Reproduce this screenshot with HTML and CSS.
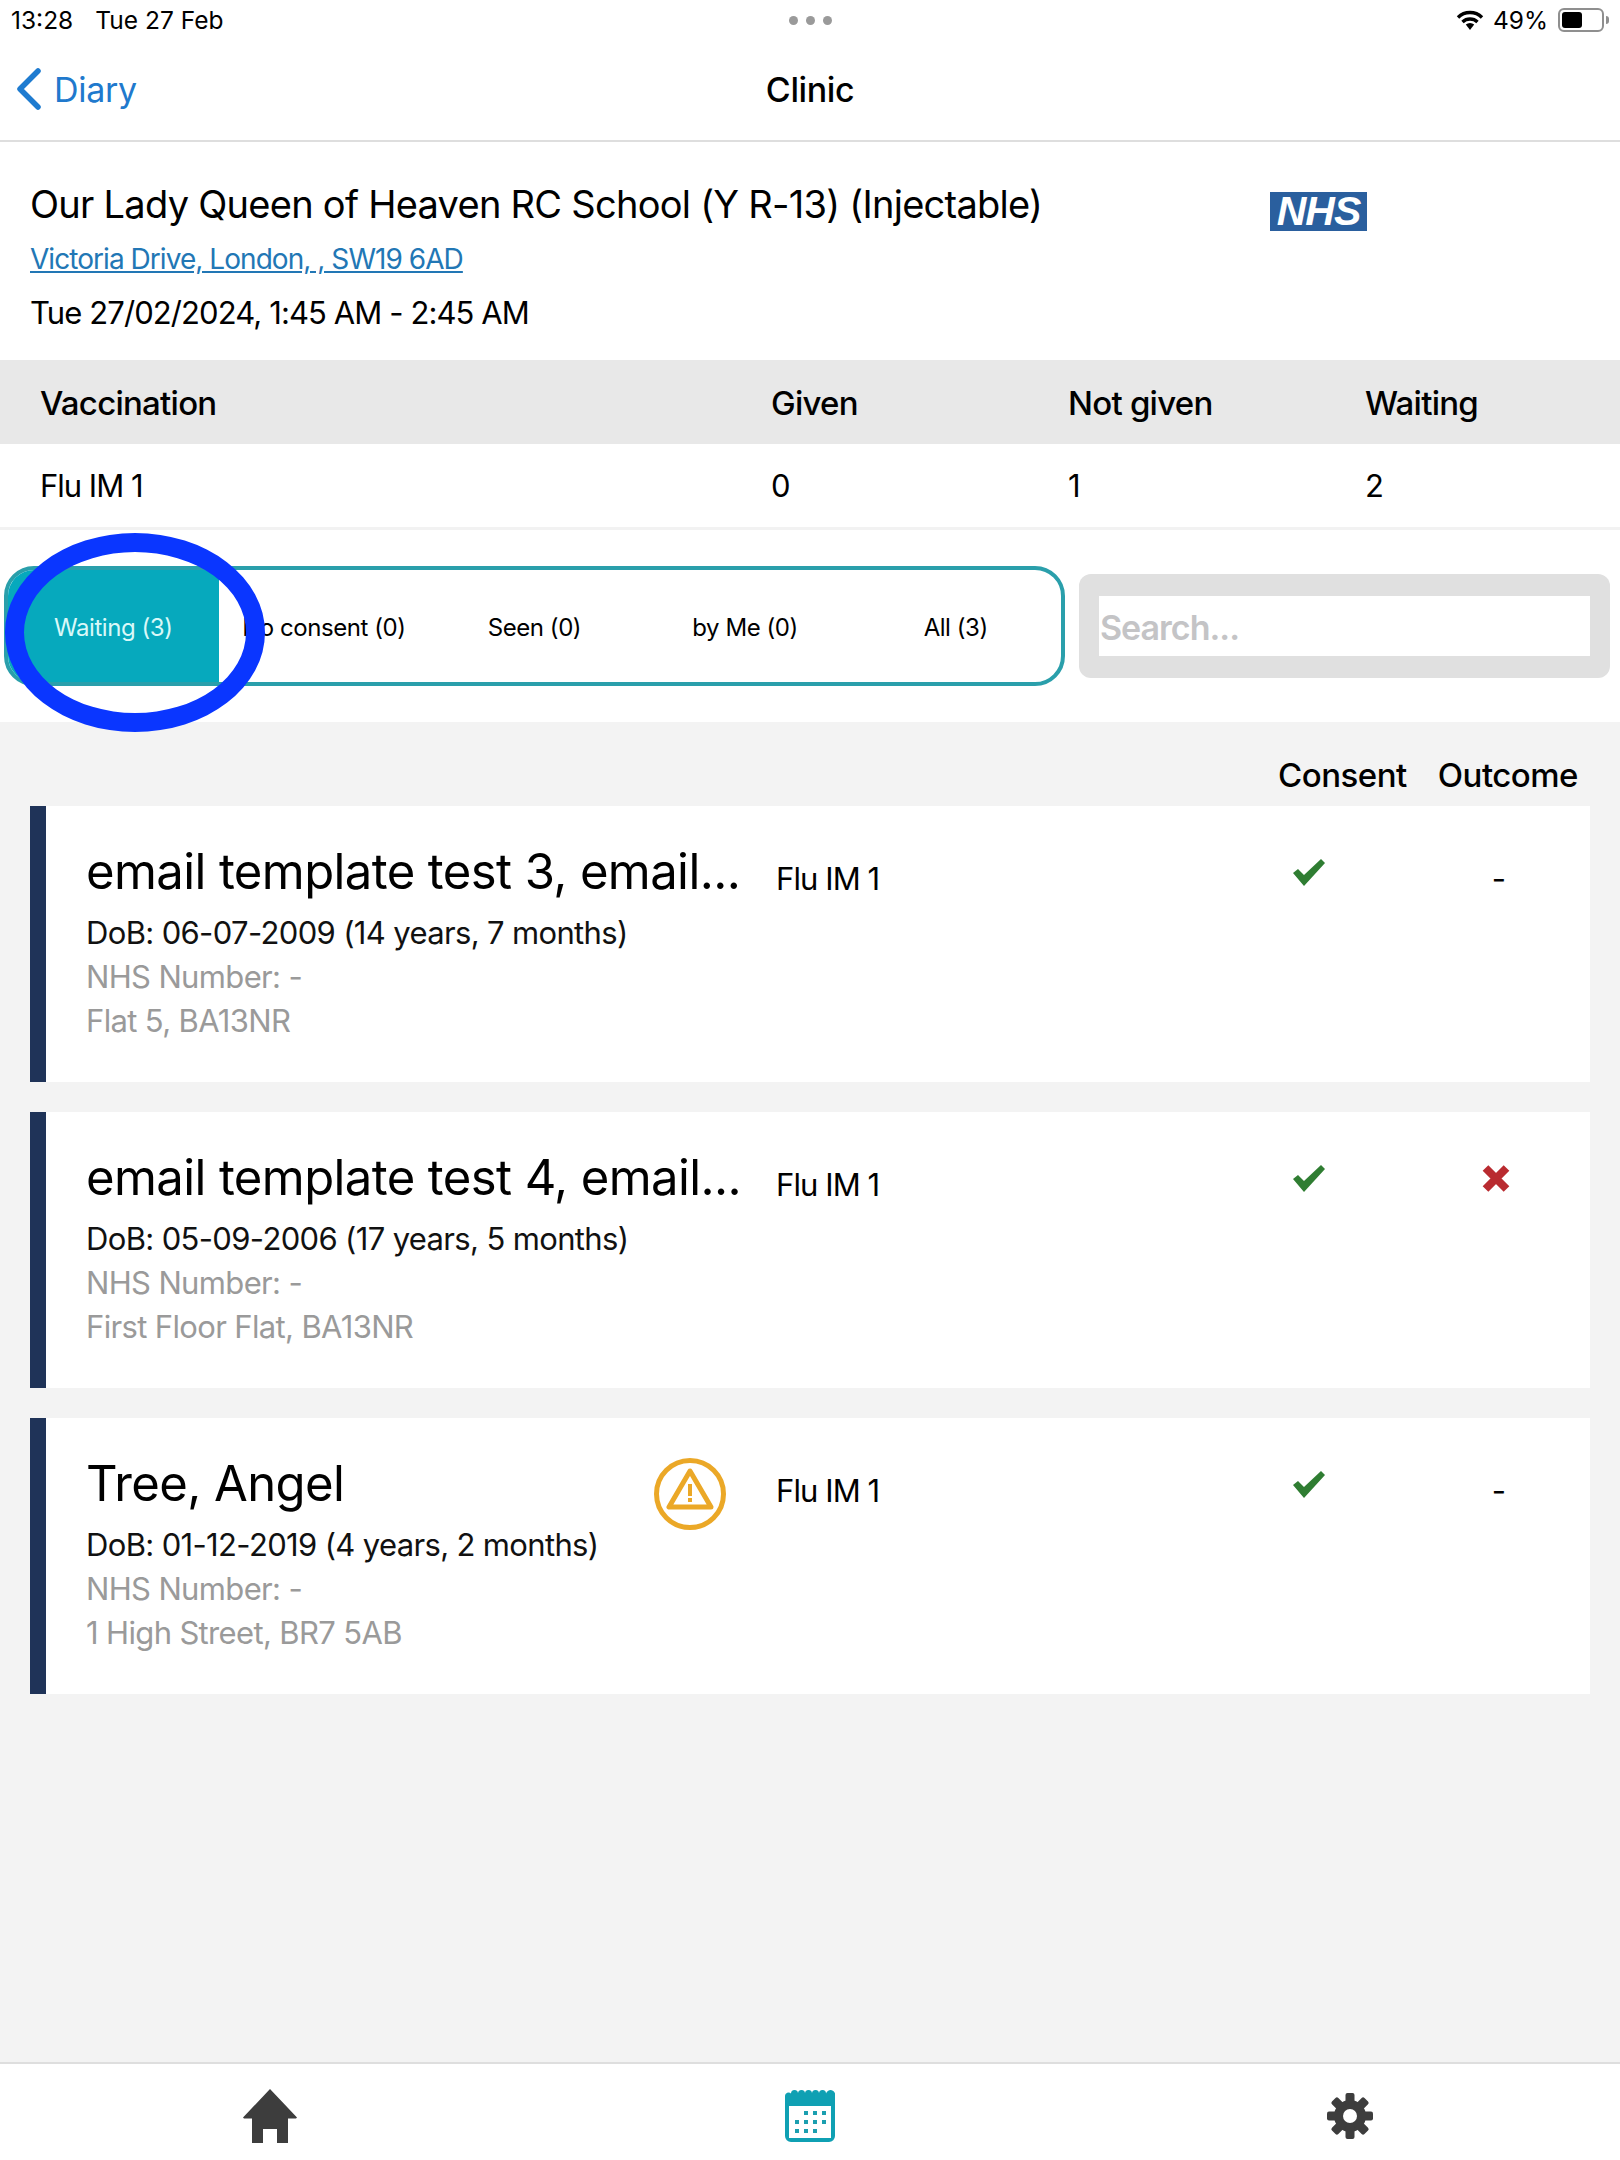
FILE: index.html
```html
<!doctype html>
<html lang="en">
    <head>
        <meta charset="UTF-8" />
        <title>Clinic</title>
        <link rel="stylesheet" href="styles.css">
    </head>
    <body>
        <svg class="defs" width="0" height="0">
            <symbol id="tick" viewBox="0 0 32 27">
                <polygon points="0,14 5,10 11,16 28,0 32,4 11,27" fill="#2f7d32" />
            </symbol>
        </svg>

        <div class="app">
            <div class="status-bar">
                <div class="status-left"><span>13:28</span><span>Tue 27 Feb</span></div>
                <div class="status-dots"><i></i><i></i><i></i></div>
                <div class="status-right">
                    <svg width="28" height="20" viewBox="0 0 28 20">
                        <path d="M2 7.5a17 17 0 0 1 24 0M6.5 12a11 11 0 0 1 15 0" fill="none" stroke="#000" stroke-width="3.4" />
                        <path d="M9.8 14.6a6 6 0 0 1 8.4 0L14 20z" fill="#000" />
                    </svg>
                    <span>49%</span>
                    <div class="battery"><div class="battery-fill"></div></div>
                    <div class="battery-nub"></div>
                </div>
            </div>

            <div class="nav-bar">
                <a class="back-link">
                    <svg width="26" height="42" viewBox="0 0 26 42">
                        <polyline points="23,3 5,21 23,39" fill="none" stroke="#1e7bd0" stroke-width="5.5" stroke-linecap="round" stroke-linejoin="round" />
                    </svg>
                    <span>Diary</span>
                </a>
                <div class="nav-title">Clinic</div>
            </div>

            <div class="clinic-info">
                <div>
                    <h1>Our Lady Queen of Heaven RC School (Y R-13) (Injectable)</h1>
                    <a class="address">Victoria Drive, London, , SW19 6AD</a>
                    <p class="clinic-time">Tue 27/02/2024, 1:45 AM - 2:45 AM</p>
                </div>
                <div class="nhs-logo">NHS</div>
            </div>

            <div class="summary summary-head">
                <div>Vaccination</div>
                <div>Given</div>
                <div>Not given</div>
                <div>Waiting</div>
            </div>
            <div class="summary summary-row">
                <div>Flu IM 1</div>
                <div>0</div>
                <div>1</div>
                <div>2</div>
            </div>

            <div class="filter-bar">
                <div class="tabs">
                    <div class="tab active">Waiting (3)</div>
                    <div class="tab">No consent (0)</div>
                    <div class="tab">Seen (0)</div>
                    <div class="tab">by Me (0)</div>
                    <div class="tab">All (3)</div>
                </div>
                <div class="search">
                    <div class="search-input">Search...</div>
                </div>
                <div class="highlight-ring"></div>
            </div>

            <div class="patients">
                <div class="patients-head">
                    <span>Consent</span>
                    <span>Outcome</span>
                </div>

                <div class="card">
                    <div class="person">
                        <div class="name-row"><div class="name">email template test 3, email...</div></div>
                        <div class="dob">DoB: 06-07-2009 (14 years, 7 months)</div>
                        <div class="muted">NHS Number: -</div>
                        <div class="muted">Flat 5, BA13NR</div>
                    </div>
                    <div class="vaccine">Flu IM 1</div>
                    <div class="mark"><svg class="tick"><use href="#tick" /></svg></div>
                    <div class="mark dash">-</div>
                </div>

                <div class="card">
                    <div class="person">
                        <div class="name-row"><div class="name">email template test 4, email...</div></div>
                        <div class="dob">DoB: 05-09-2006 (17 years, 5 months)</div>
                        <div class="muted">NHS Number: -</div>
                        <div class="muted">First Floor Flat, BA13NR</div>
                    </div>
                    <div class="vaccine">Flu IM 1</div>
                    <div class="mark"><svg class="tick"><use href="#tick" /></svg></div>
                    <div class="mark">
                        <svg class="tick" viewBox="0 0 27 27">
                            <path d="M3 3L24 24M24 3L3 24" stroke="#b92b30" stroke-width="8" />
                        </svg>
                    </div>
                </div>

                <div class="card">
                    <div class="person">
                        <div class="name-row">
                            <div class="name">Tree, Angel</div>
                            <svg class="alert" width="72" height="72" viewBox="0 0 72 72">
                                <circle cx="36" cy="36" r="33.5" fill="none" stroke="#eba827" stroke-width="5" />
                                <polygon points="36,13 15,49 57,49" fill="none" stroke="#eba827" stroke-width="5" stroke-linejoin="round" />
                                <rect x="34" y="26" width="4" height="12" fill="#eba827" />
                                <rect x="34" y="40" width="4" height="4" fill="#eba827" />
                            </svg>
                        </div>
                        <div class="dob">DoB: 01-12-2019 (4 years, 2 months)</div>
                        <div class="muted">NHS Number: -</div>
                        <div class="muted">1 High Street, BR7 5AB</div>
                    </div>
                    <div class="vaccine">Flu IM 1</div>
                    <div class="mark"><svg class="tick"><use href="#tick" /></svg></div>
                    <div class="mark dash">-</div>
                </div>
            </div>

            <div class="tab-bar">
                <svg width="54" height="54" viewBox="0 0 54 54">
                    <path d="M27 0L54 28.5L53 29.5H45V54H34V40H20V54H9V29.5H1L0 28.5Z" fill="#3d3d3d" />
                </svg>
                <svg width="50" height="52" viewBox="0 0 50 52">
                    <path d="M0 6a3.5 3.5 0 0 1 6-2.500a3.500 3.500 0 0 1 7 0a3.500 3.500 0 0 1 7 0a3.500 3.500 0 0 1 7 0a3.500 3.500 0 0 1 7 0a3.500 3.500 0 0 1 7 0a3.500 3.500 0 0 1 9 2.500V46a6 6 0 0 1-6 6H6a6 6 0 0 1-6-6Z" fill="#0fa0b3" />
                    <rect x="4" y="16" width="42" height="32" fill="#fff" />
                    <g fill="#1b9fb0">
                        <rect x="19" y="21" width="4" height="4" />
                        <rect x="28" y="21" width="4" height="4" />
                        <rect x="37" y="21" width="4" height="4" />
                        <rect x="10" y="30" width="4" height="4" />
                        <rect x="19" y="30" width="4" height="4" />
                        <rect x="28" y="30" width="4" height="4" />
                        <rect x="37" y="30" width="4" height="4" />
                        <rect x="10" y="39" width="4" height="4" />
                        <rect x="19" y="39" width="4" height="4" />
                        <rect x="28" y="39" width="4" height="4" />
                    </g>
                </svg>
                <svg width="46" height="46" viewBox="0 0 46 46">
                    <g fill="#3d3d3d">
                        <circle cx="23" cy="23" r="16" />
                        <rect x="18.500" y="0" width="9" height="46" rx="2" />
                        <rect x="18.500" y="0" width="9" height="46" rx="2" transform="rotate(45 23 23)" />
                        <rect x="18.500" y="0" width="9" height="46" rx="2" transform="rotate(90 23 23)" />
                        <rect x="18.500" y="0" width="9" height="46" rx="2" transform="rotate(135 23 23)" />
                    </g>
                    <circle cx="23" cy="23" r="7" fill="#fff" />
                </svg>
            </div>
        </div>
    </body>
</html>
```

FILE: styles.css
```css
body {
    margin: 0;
    background-color: #fff;
    color: #000;
    font-family: "Inter", "Liberation Sans", sans-serif;
}

.defs {
    display: block;
}

.app {
    height: 2160px;
    display: flex;
    flex-direction: column;
}

.status-bar {
    height: 40px;
    padding: 0 11px;
    display: grid;
    grid-template-columns: 1fr auto 1fr;
    align-items: center;
    font-size: 24.5px;
}

.status-left {
    display: flex;
    gap: 22px;
}

.status-dots {
    display: flex;
    gap: 8px;
}

.status-dots i {
    width: 9px;
    height: 9px;
    border-radius: 50%;
    background-color: #9a9a9a;
}

.status-right {
    display: flex;
    justify-content: flex-end;
    align-items: center;
    gap: 9px;
}

.battery {
    width: 46px;
    height: 24px;
    box-sizing: border-box;
    padding: 2px;
    border: 2px solid #8f8f8f;
    border-radius: 6px;
    margin-left: 1px;
}

.battery-fill {
    width: 20px;
    height: 100%;
    background-color: #000;
    border-radius: 3px;
}

.battery-nub {
    width: 3px;
    height: 8px;
    margin-left: -7px;
    background-color: #8f8f8f;
    border-radius: 0 3px 3px 0;
}

.nav-bar {
    height: 102px;
    box-sizing: border-box;
    border-bottom: 2px solid #dedede;
    padding: 0 15px 2px;
    display: grid;
    grid-template-columns: 1fr auto 1fr;
    align-items: center;
}

.back-link {
    display: flex;
    align-items: center;
    gap: 13px;
    font-size: 34px;
    letter-spacing: -0.3px;
    color: #2079cd;
}

.nav-title {
    font-size: 34px;
    font-weight: 500;
    letter-spacing: -0.4px;
}

.clinic-info {
    height: 218px;
    box-sizing: border-box;
    padding: 39px 0 0 30px;
    display: flex;
}

h1 {
    width: 1240px;
    margin: 0;
    font-size: 38px;
    font-weight: 400;
    line-height: 46px;
    letter-spacing: -0.73px;
}

.address {
    display: block;
    margin-top: 14px;
    font-size: 28px;
    line-height: 36px;
    letter-spacing: -0.95px;
    color: #2277b5;
    text-decoration: underline;
}

.clinic-time {
    margin: 17px 0 0;
    font-size: 31px;
    line-height: 38px;
    letter-spacing: -0.9px;
}

.nhs-logo {
    width: 97px;
    height: 39px;
    margin-top: 11px;
    background-color: #2a5f9e;
    color: #fff;
    font-family: "Liberation Sans", sans-serif;
    font-size: 41px;
    font-weight: 700;
    font-style: italic;
    line-height: 39px;
    letter-spacing: -1px;
    text-align: center;
}

.summary {
    padding-left: 40px;
    display: grid;
    grid-template-columns: 731px 297px 297px 1fr;
    align-items: center;
}

.summary-head {
    height: 84px;
    padding-top: 2px;
    box-sizing: border-box;
    background-color: #e8e8e8;
    font-size: 33px;
    font-weight: 500;
    letter-spacing: -0.75px;
}

.summary-row {
    height: 86px;
    box-sizing: border-box;
    border-bottom: 3px solid #f2f2f2;
    font-size: 31px;
    letter-spacing: -1px;
}

.filter-bar {
    height: 192px;
    padding: 0 10px 0 4px;
    display: flex;
    align-items: center;
    gap: 14px;
    position: relative;
}

.tabs {
    width: 1061px;
    height: 120px;
    box-sizing: border-box;
    border: 4px solid #2a9fab;
    border-radius: 30px;
    overflow: hidden;
    display: grid;
    grid-template-columns: repeat(5, 1fr);
}

.tab {
    padding-top: 2px;
    display: flex;
    align-items: center;
    justify-content: center;
    font-size: 24px;
    letter-spacing: -0.45px;
}

.tab.active {
    margin: -4px 0 -4px -4px;
    padding-left: 4px;
    background-color: #06a9bd;
    color: #d9f8f8;
}

.search {
    flex: 1;
    height: 104px;
    box-sizing: border-box;
    padding: 22px 20px;
    background-color: #e0e0e0;
    border-radius: 12px;
}

.search-input {
    height: 60px;
    padding-left: 1px;
    background-color: #fff;
    color: #c4c4c6;
    font-size: 34px;
    font-weight: 600;
    line-height: 64px;
    letter-spacing: -1px;
}

.highlight-ring {
    position: absolute;
    left: 5px;
    top: 3px;
    width: 260px;
    height: 199px;
    box-sizing: border-box;
    border: 19px solid #0a36ff;
    border-radius: 50%;
}

.patients {
    flex: 1;
    padding: 0 30px;
    background-color: #f3f3f3;
    display: flex;
    flex-direction: column;
    gap: 30px;
}

.patients-head {
    height: 84px;
    box-sizing: border-box;
    padding: 38px 12px 0 0;
    margin-bottom: -30px;
    display: flex;
    justify-content: flex-end;
    align-items: flex-start;
    gap: 31px;
    font-size: 33px;
    font-weight: 500;
    line-height: 30px;
    letter-spacing: -0.5px;
}

.card {
    height: 276px;
    box-sizing: border-box;
    border-left: 16px solid #1f3358;
    padding-left: 40px;
    background-color: #fff;
    display: grid;
    grid-template-columns: 690px 433px 200px 174px;
}

.person {
    padding-top: 36px;
    font-size: 31px;
    line-height: 44px;
    letter-spacing: -0.65px;
}

.name-row {
    height: 60px;
    margin-bottom: 9px;
    display: flex;
    justify-content: space-between;
}

.name {
    font-size: 49px;
    line-height: 60px;
    letter-spacing: -0.6px;
}

.alert {
    margin: 4px 50px 0 0;
}

.dob {
    color: #111;
}

.muted {
    color: #9a9a9a;
}

.vaccine {
    padding-top: 51px;
    font-size: 31px;
    line-height: 44px;
    letter-spacing: -0.9px;
}

.mark {
    padding-top: 53px;
    text-align: center;
}

.tick {
    width: 32px;
    height: 27px;
}

.dash {
    padding-top: 51px;
    padding-left: 6px;
    font-size: 31px;
    line-height: 44px;
}

.tab-bar {
    height: 98px;
    box-sizing: border-box;
    border-top: 2px solid #dedede;
    padding-top: 8px;
    display: grid;
    grid-template-columns: repeat(3, 1fr);
    justify-items: center;
    align-items: center;
}
```
